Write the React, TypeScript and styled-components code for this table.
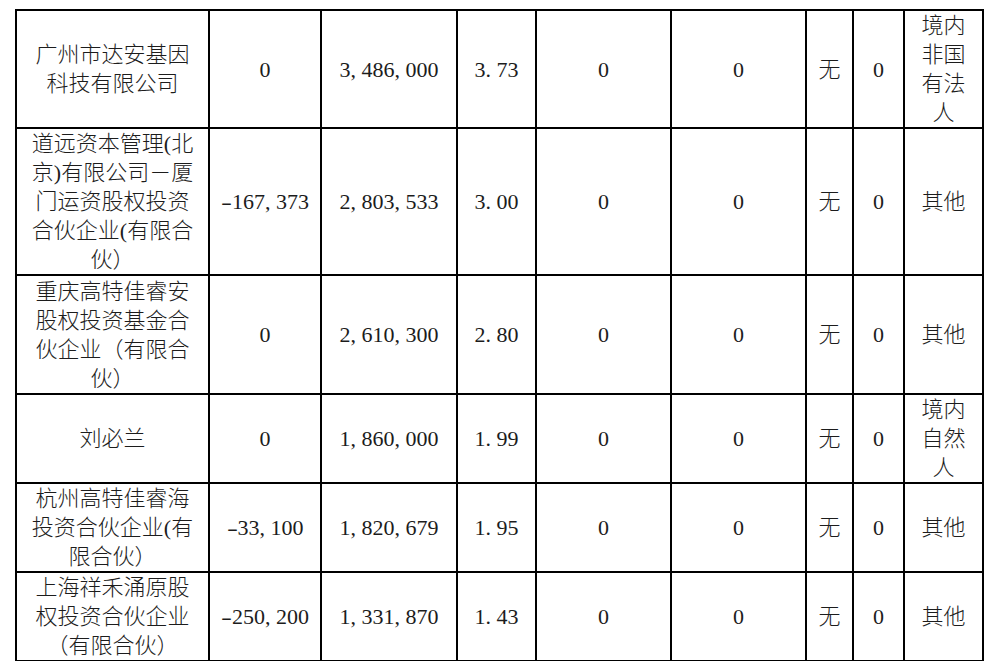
import React from "react";
import styled, { createGlobalStyle } from "styled-components";

const GlobalStyle = createGlobalStyle`
  html, body {
    margin: 0;
    background: #ffffff;
    overflow: hidden;
  }
`;

const Page = styled.div`
  padding: 9px 0 0 15px;
  font-family: "Liberation Serif", "Noto Sans CJK SC", serif;
  font-size: 22px;
  font-weight: 300;
  color: #1c1c1c;
`;

const Sheet = styled.table`
  width: 969px;
  border-collapse: collapse;
  table-layout: fixed;
`;

const Row = styled.tr<{ $h: number }>`
  height: ${p => p.$h}px;
`;

const Cell = styled.td`
  border: 2px solid #000;
  padding: 0;
  text-align: center;
  vertical-align: middle;
  line-height: 29px;
  white-space: nowrap;
`;

const NoteCell = styled(Cell)`
  vertical-align: top;
  line-height: 22px;
  height: 60px;
`;

const Line = styled.div``;

const Punct = styled.span`
  display: inline-block;
  width: 0.5em;
  text-align: left;
`;

const Dash = styled.span`
  display: inline-block;
  width: 0.5em;
  text-align: center;
  transform: scaleX(1.5);
`;

const colWidths = [193, 112, 136, 79, 135, 135, 47, 51, 79];

type Holder = {
  name: string[];
  change: string;
  held: string;
  ratio: string;
  limited: string;
  pledged: string;
  status: string;
  count: string;
  kind: string[];
  h: number;
};

const holders: Holder[] = [
  {
    name: ["广州市达安基因", "科技有限公司"],
    change: "0",
    held: "3,486,000",
    ratio: "3.73",
    limited: "0",
    pledged: "0",
    status: "无",
    count: "0",
    kind: ["境内", "非国", "有法", "人"],
    h: 117
  },
  {
    name: [
      "道远资本管理(北",
      "京)有限公司－厦",
      "门运资股权投资",
      "合伙企业(有限合",
      "伙）"
    ],
    change: "-167,373",
    held: "2,803,533",
    ratio: "3.00",
    limited: "0",
    pledged: "0",
    status: "无",
    count: "0",
    kind: ["其他"],
    h: 145
  },
  {
    name: ["重庆高特佳睿安", "股权投资基金合", "伙企业（有限合", "伙）"],
    change: "0",
    held: "2,610,300",
    ratio: "2.80",
    limited: "0",
    pledged: "0",
    status: "无",
    count: "0",
    kind: ["其他"],
    h: 119
  },
  {
    name: ["刘必兰"],
    change: "0",
    held: "1,860,000",
    ratio: "1.99",
    limited: "0",
    pledged: "0",
    status: "无",
    count: "0",
    kind: ["境内", "自然", "人"],
    h: 88
  },
  {
    name: ["杭州高特佳睿海", "投资合伙企业(有", "限合伙）"],
    change: "-33,100",
    held: "1,820,679",
    ratio: "1.95",
    limited: "0",
    pledged: "0",
    status: "无",
    count: "0",
    kind: ["其他"],
    h: 88
  },
  {
    name: ["上海祥禾涌原股", "权投资合伙企业", "（有限合伙）"],
    change: "-250,200",
    held: "1,331,870",
    ratio: "1.43",
    limited: "0",
    pledged: "0",
    status: "无",
    count: "0",
    kind: ["其他"],
    h: 89
  }
];

// SimSun style: comma, dot and minus take half an em each
const Num: React.FC<{ value: string }> = ({ value }) => (
  <>
    {value.split("").map((ch, i) =>
      ch === "," || ch === "." ? (
        <Punct key={i}>{ch}</Punct>
      ) : ch === "-" ? (
        <Dash key={i}>-</Dash>
      ) : (
        <React.Fragment key={i}>{ch}</React.Fragment>
      )
    )}
  </>
);

const Lines: React.FC<{ items: string[] }> = ({ items }) => (
  <>
    {items.map((t, i) => (
      <Line key={i}>{t}</Line>
    ))}
  </>
);

const App: React.FC = () => (
  <>
    <GlobalStyle />
    <Page>
      <Sheet>
        <colgroup>
          {colWidths.map((w, i) => (
            <col key={i} style={{ width: w }} />
          ))}
        </colgroup>
        <tbody>
          {holders.map((r, i) => (
            <Row key={i} $h={r.h}>
              <Cell>
                <Lines items={r.name} />
              </Cell>
              <Cell>
                <Num value={r.change} />
              </Cell>
              <Cell>
                <Num value={r.held} />
              </Cell>
              <Cell>
                <Num value={r.ratio} />
              </Cell>
              <Cell>{r.limited}</Cell>
              <Cell>{r.pledged}</Cell>
              <Cell>{r.status}</Cell>
              <Cell>{r.count}</Cell>
              <Cell>
                <Lines items={r.kind} />
              </Cell>
            </Row>
          ))}
          <tr>
            <NoteCell colSpan={9}>上述股东关联关系或一致行动的说明</NoteCell>
          </tr>
        </tbody>
      </Sheet>
    </Page>
  </>
);

export default App;
